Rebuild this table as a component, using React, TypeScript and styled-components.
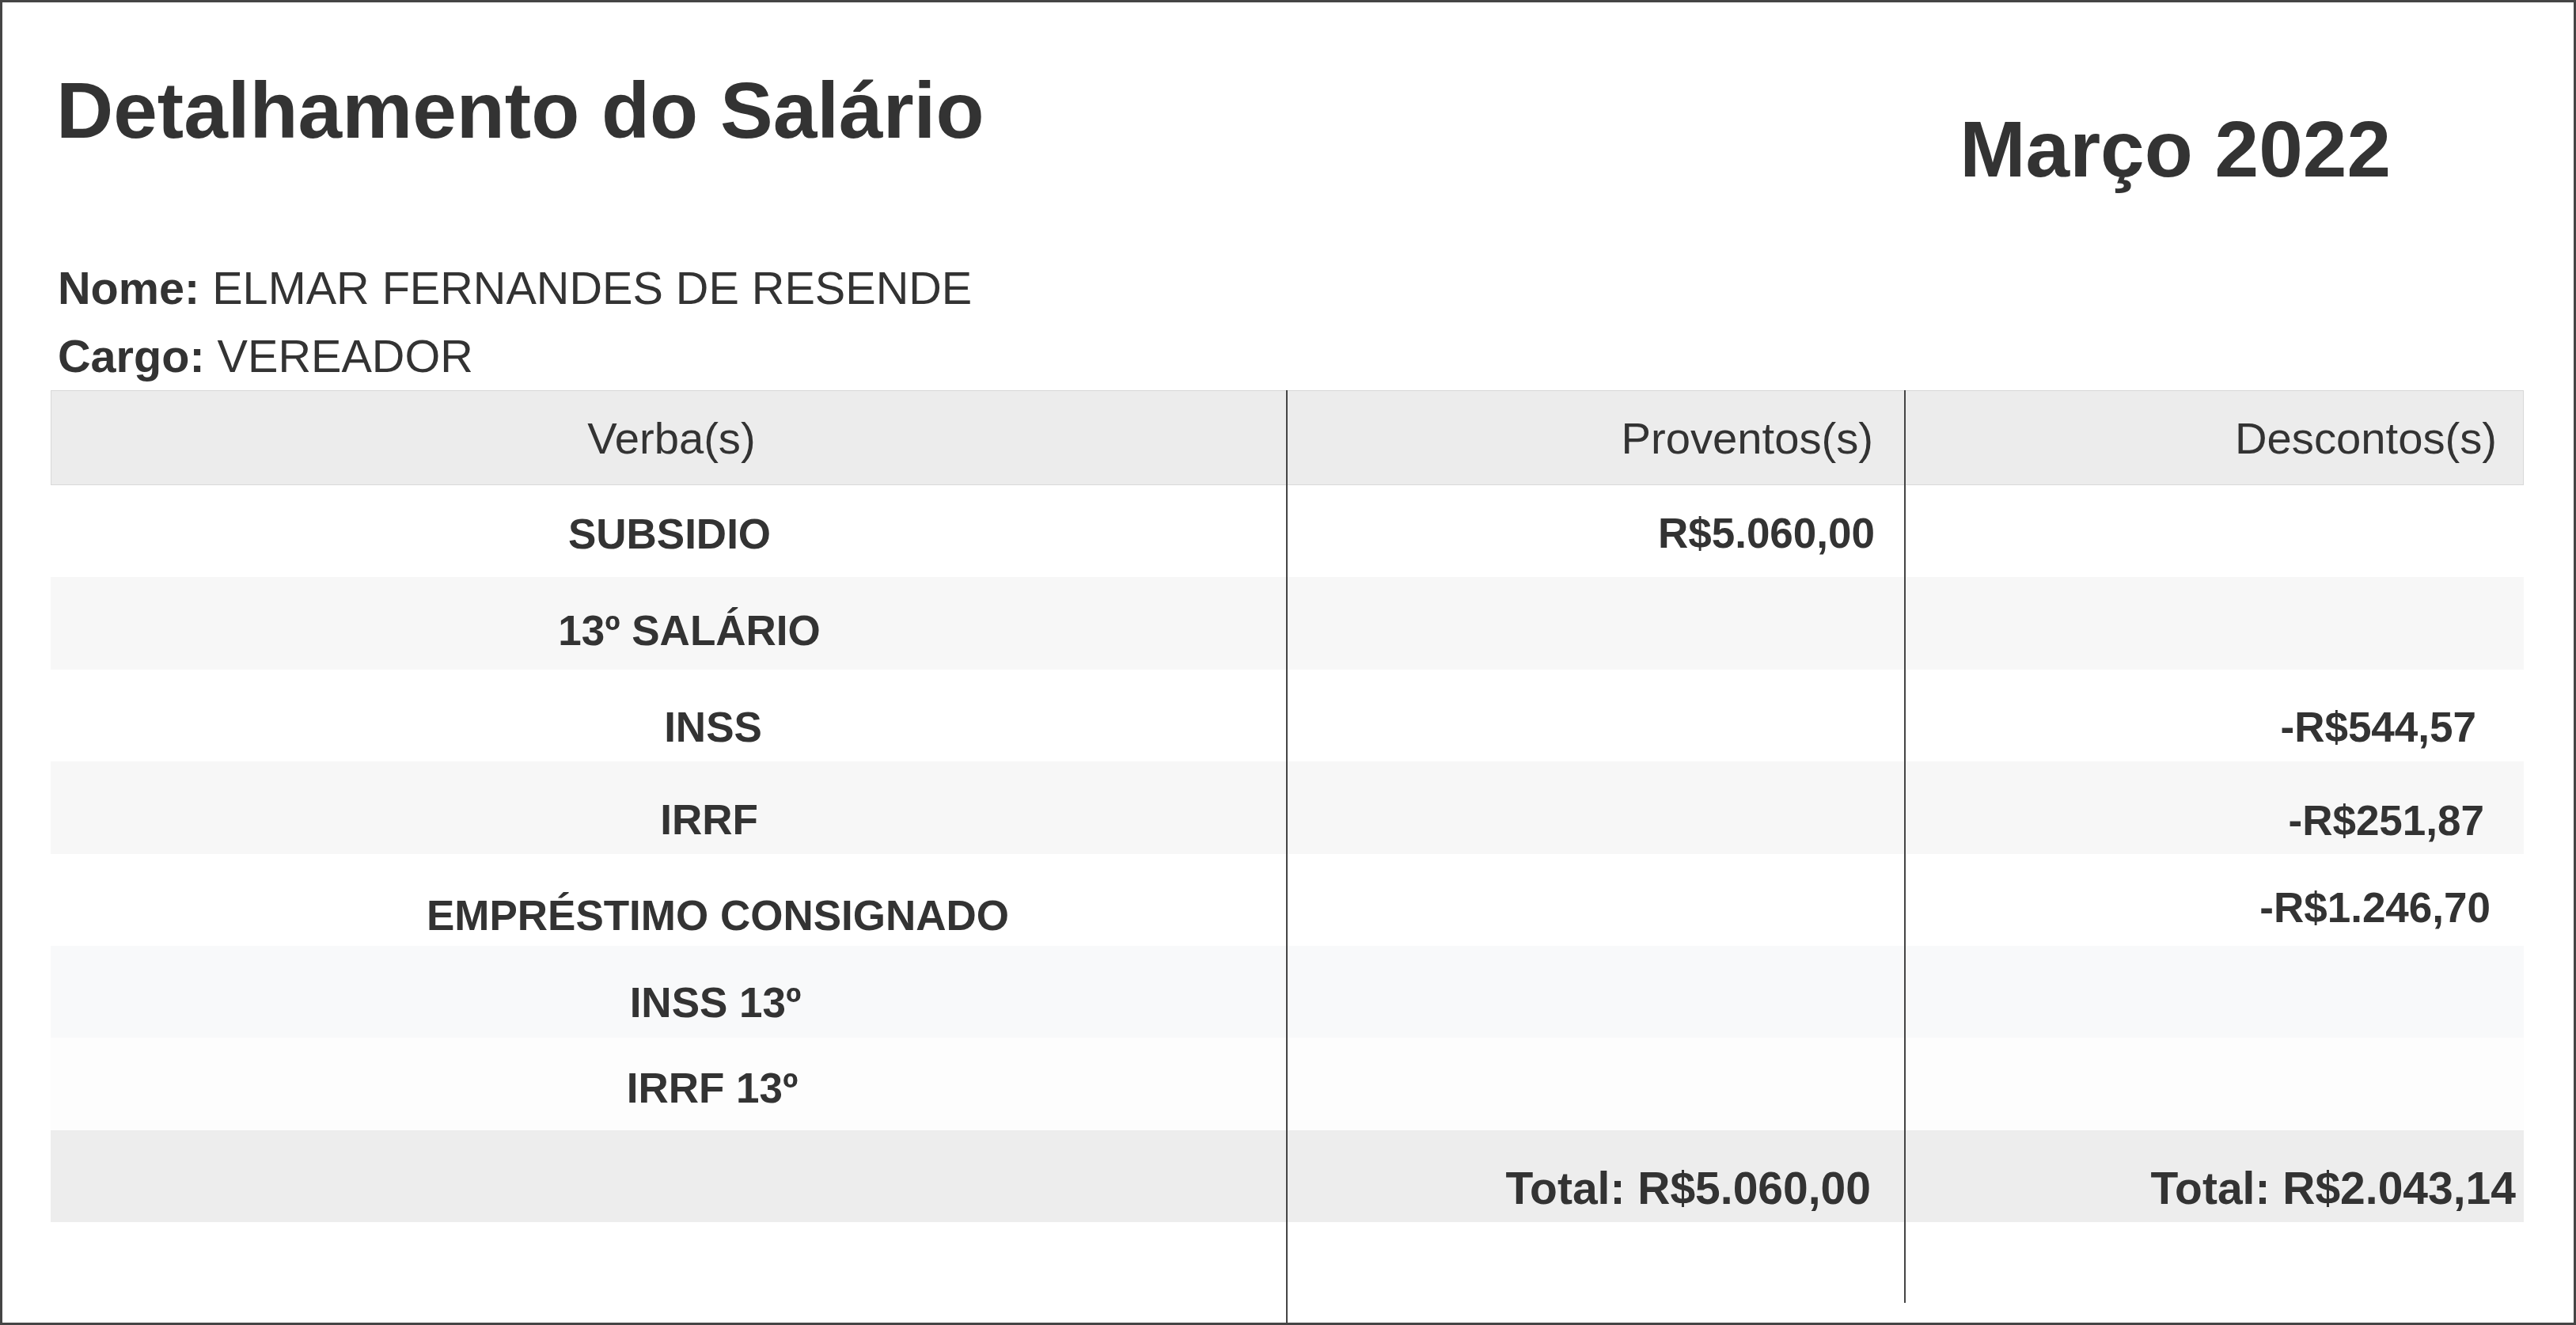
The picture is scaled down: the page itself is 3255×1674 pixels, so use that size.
import React from "react";
import styled, { createGlobalStyle } from "styled-components";

const GlobalStyle = createGlobalStyle`
  html, body { margin: 0; padding: 0; background: #ffffff; }
  body {
    font-family: "Liberation Sans", Arial, Helvetica, sans-serif;
    color: #333333;
  }
  * { box-sizing: border-box; }
`;

const Page = styled.div`
  display: flex;
  flex-direction: column;
  width: 3255px;
  height: 1674px;
  border: 3px solid #454545;
  padding: 79px 63px 0 61px;
  background: #ffffff;
`;

const TopBar = styled.header`
  display: flex;
  justify-content: space-between;
  align-items: flex-start;
  padding-left: 7px;
`;

const Title = styled.h1`
  margin: 0;
  font-size: 100px;
  line-height: 115px;
  font-weight: 700;
  color: #333333;
  white-space: nowrap;
`;

const Month = styled.h2`
  margin: 49px 168px 0 0;
  font-size: 100px;
  line-height: 115px;
  font-weight: 700;
  color: #333333;
  white-space: nowrap;
`;

const Info = styled.section`
  margin-top: 75px;
  padding-left: 9px;
`;

const InfoLine = styled.p`
  margin: 0;
  font-size: 57.6px;
  line-height: 86px;
  font-weight: 400;
  color: #333333;
  white-space: nowrap;
`;

const Label = styled.strong`
  font-weight: 700;
`;

const Table = styled.div`
  flex: 1;
  display: flex;
  flex-direction: column;
`;

const columns = "1561px 781px 1fr";

const HeaderRow = styled.div`
  display: grid;
  grid-template-columns: ${columns};
  height: 120px;
  background: #ececec;
  box-shadow: inset 0 0 0 1px #d8d8d8;
`;

const HeaderCell = styled.div<{ $align: "center" | "right"; $pad: number; $divider?: boolean }>`
  display: flex;
  align-items: center;
  justify-content: ${(p) => (p.$align === "center" ? "center" : "flex-end")};
  padding-left: ${(p) => (p.$align === "center" ? p.$pad * 2 : 0)}px;
  padding-right: ${(p) => (p.$align === "right" ? p.$pad : 0)}px;
  border-left: ${(p) => (p.$divider ? "2px solid #454545" : "none")};
  font-size: 56.2px;
  font-weight: 400;
  color: #333333;
  white-space: nowrap;
`;

const Row = styled.div<{ $bg: string }>`
  display: grid;
  grid-template-columns: ${columns};
  height: 116.4px;
  background: ${(p) => p.$bg};
`;

const Cell = styled.div<{
  $align: "center" | "right";
  $pad?: number;
  $top?: number;
  $divider?: boolean;
  $big?: boolean;
}>`
  padding-top: ${(p) => p.$top ?? 0}px;
  text-align: ${(p) => p.$align};
  padding-left: ${(p) => (p.$align === "center" ? (p.$pad ?? 0) * 2 : 0)}px;
  padding-right: ${(p) => (p.$align === "right" ? p.$pad ?? 0 : 0)}px;
  border-left: ${(p) => (p.$divider ? "2px solid #454545" : "none")};
  font-size: ${(p) => (p.$big ? 57 : 53)}px;
  line-height: 1.2;
  font-weight: 700;
  color: #333333;
  white-space: nowrap;
`;

const Filler = styled.div`
  flex: 1;
  display: grid;
  grid-template-columns: ${columns};
  align-items: start;
`;

const FillerCell = styled.div<{ $height?: number }>`
  border-left: 2px solid #454545;
  align-self: ${(p) => (p.$height ? "start" : "stretch")};
  height: ${(p) => (p.$height ? `${p.$height}px` : "auto")};
`;

type Item = {
  verba: string;
  dx: number;
  top: number;
  bg: string;
  prov?: string;
  provPad?: number;
  provTop?: number;
  desc?: string;
  descPad?: number;
  descTop?: number;
};

const items: Item[] = [
  { verba: "SUBSIDIO", dx: 1.5, top: 29.8, bg: "#ffffff", prov: "R$5.060,00", provPad: 37, provTop: 28.8 },
  { verba: "13º SALÁRIO", dx: 26.5, top: 35.4, bg: "#f7f7f7" },
  { verba: "INSS", dx: 56.5, top: 41, bg: "#ffffff", desc: "-R$544,57", descPad: 60, descTop: 41 },
  { verba: "IRRF", dx: 51.5, top: 42.1, bg: "#f7f7f7", desc: "-R$251,87", descPad: 50, descTop: 42.6 },
  { verba: "EMPRÉSTIMO CONSIGNADO", dx: 62.5, top: 46.7, bg: "#ffffff", desc: "-R$1.246,70", descPad: 42, descTop: 36.2 },
  { verba: "INSS 13º", dx: 59.5, top: 39.8, bg: "#f8f9fa" },
  { verba: "IRRF 13º", dx: 55.5, top: 32, bg: "#fdfdfd" },
];

export default function App() {
  return (
    <>
      <GlobalStyle />
      <Page>
        <TopBar>
          <Title>Detalhamento do Salário</Title>
          <Month>Março 2022</Month>
        </TopBar>
        <Info>
          <InfoLine>
            <Label>Nome:</Label> ELMAR FERNANDES DE RESENDE
          </InfoLine>
          <InfoLine>
            <Label>Cargo:</Label> VEREADOR
          </InfoLine>
        </Info>
        <Table>
          <HeaderRow>
            <HeaderCell $align="center" $pad={4}>Verba(s)</HeaderCell>
            <HeaderCell $align="right" $pad={39} $divider>Proventos(s)</HeaderCell>
            <HeaderCell $align="right" $pad={34} $divider>Descontos(s)</HeaderCell>
          </HeaderRow>
          {items.map((it) => (
            <Row key={it.verba} $bg={it.bg}>
              <Cell $align="center" $pad={it.dx} $top={it.top}>
                {it.verba}
              </Cell>
              <Cell $align="right" $pad={it.provPad} $top={it.provTop} $divider>
                {it.prov ?? ""}
              </Cell>
              <Cell $align="right" $pad={it.descPad} $top={it.descTop} $divider>
                {it.desc ?? ""}
              </Cell>
            </Row>
          ))}
          <Row $bg="#ededed">
            <Cell $align="center" />
            <Cell $align="right" $pad={42} $top={39.2} $divider $big>
              Total: R$5.060,00
            </Cell>
            <Cell $align="right" $pad={10} $top={39.2} $divider $big>
              Total: R$2.043,14
            </Cell>
          </Row>
          <Filler>
            <div />
            <FillerCell />
            <FillerCell $height={102} />
          </Filler>
        </Table>
      </Page>
    </>
  );
}
